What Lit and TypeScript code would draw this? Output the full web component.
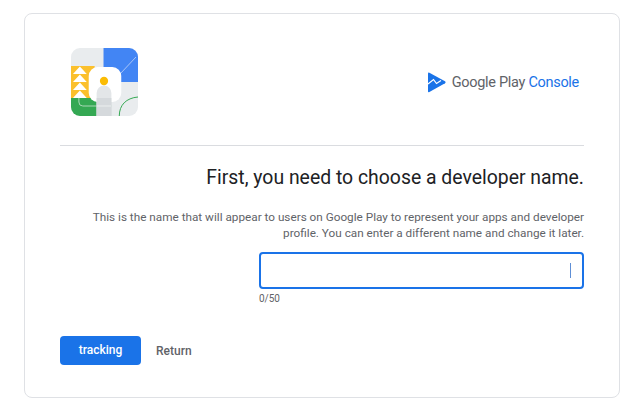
import { css, html, LitElement } from "lit";
import { customElement } from "lit/decorators.js";

@customElement("app-root")
export class AppRoot extends LitElement {
  render() {
    return html`
      <div class="card">
        <div class="header">
          <svg class="art" width="67" height="68" viewBox="0 0 68 68" preserveAspectRatio="none">
            <defs>
              <clipPath id="tile"><rect width="68" height="68" rx="9" /></clipPath>
            </defs>
            <g clip-path="url(#tile)">
              <rect width="68" height="68" fill="#e9ecee" />
              <rect x="33" width="35" height="34" fill="#4285f4" />
              <path d="M44 32 L66 9" stroke="#a9c6f7" stroke-width="1" fill="none" />
              <rect y="18" width="24" height="32" fill="#fbc02d" />
              <path d="M2 26 L9 18.5 L16 26Z M2 34 L9 26.5 L16 34Z M2 42 L9 34.5 L16 42Z M2 50 L9 42.5 L16 50Z" fill="#fff" />
              <rect y="50" width="26" height="18" fill="#34a853" />
              <rect x="26" y="50" width="15" height="18" fill="#d5d9dc" />
              <path d="M8 50 V54 Q8 58 12 58 H41" stroke="#a8d8b6" stroke-width="1" fill="none" />
              <path d="M49 68 C49 57 56 50 68 49" stroke="#34a853" stroke-width="1" fill="none" />
              <rect x="18" y="19" width="33" height="35" rx="9" fill="#fff" />
              <path d="M26 54 V45 A7.5 7.5 0 0 1 41 45 V54Z" fill="#e3e6e8" />
              <rect x="26" y="50" width="15" height="18" fill="#d5d9dc" />
              <path d="M26 58 H41" stroke="#eceff0" stroke-width="1" />
              <circle cx="33.5" cy="33" r="4.2" fill="#fbbc04" />
            </g>
          </svg>
          <div class="brand">
            <svg width="19" height="21" viewBox="0 0 19 21">
              <path d="M1 1.5 Q1 .2 2.4 .8 L18 9.2 Q19.2 10.2 18 11.2 L2.4 20 Q1 20.6 1 19.2Z" fill="#1a73e8" />
              <path d="M1 12 L6.5 7.5 L9.5 11.5 L14 8.5" stroke="#fff" stroke-width="1.2" fill="none" />
            </svg>
            <span class="wordmark">Google Play <span class="console">Console</span></span>
          </div>
        </div>
        <div class="body">
          <h1>First, you need to choose a developer name.</h1>
          <p>
            This is the name that will appear to users on Google Play to represent your apps and
            developer<br />profile. You can enter a different name and change it later.
          </p>
          <div class="field">
            <div class="input"><span class="caret"></span></div>
            <div class="count">0/50</div>
          </div>
          <div class="actions">
            <button class="primary">tracking</button>
            <button class="link">Return</button>
          </div>
        </div>
      </div>
    `;
  }

  static styles = css`
    :host {
      display: block;
      width: 624px;
      height: 407px;
      background: #fff;
      font-family: Roboto, "Liberation Sans", sans-serif;
      overflow: hidden;
    }

    .card {
      box-sizing: border-box;
      width: 596px;
      height: 385px;
      margin: 13px 0 0 24px;
      padding: 0 35px;
      border: 1px solid #dfe1e5;
      border-radius: 8px;
    }

    .header {
      display: flex;
      align-items: flex-start;
      justify-content: space-between;
      height: 132px;
      padding: 34px 5px 0 11px;
      box-sizing: border-box;
      border-bottom: 1px solid #dadce0;
    }

    .art {
      display: block;
    }

    .brand {
      display: flex;
      align-items: center;
      gap: 6px;
      margin-top: 24px;
    }

    .wordmark {
      font-size: 14.5px;
      letter-spacing: -0.3px;
      color: #5f6368;
    }

    .console {
      color: #1a73e8;
    }

    .body {
      display: flex;
      flex-direction: column;
    }

    h1 {
      margin: 19px 0 0;
      text-align: right;
      font-size: 19.4px;
      line-height: 26px;
      font-weight: 400;
      color: #202124;
    }

    p {
      margin: 18px 0 0;
      text-align: right;
      font-size: 11.76px;
      line-height: 16px;
      color: #5f6368;
    }

    .field {
      align-self: flex-end;
      width: 325px;
      margin-top: 11px;
    }

    .input {
      box-sizing: border-box;
      display: flex;
      align-items: center;
      justify-content: flex-end;
      height: 37px;
      padding-right: 11px;
      border: 2px solid #1a73e8;
      border-radius: 4px;
    }

    .caret {
      width: 1px;
      height: 15px;
      background: #5f8fd6;
    }

    .count {
      margin-top: 3px;
      font-size: 10px;
      line-height: 13px;
      color: #5f6368;
    }

    .actions {
      display: flex;
      align-items: center;
      gap: 15px;
      margin-top: 31px;
    }

    button {
      border: 0;
      background: none;
      padding: 0;
      font: inherit;
      font-size: 12px;
      font-weight: 500;
    }

    .primary {
      width: 81px;
      height: 29px;
      padding-bottom: 1px;
      border-radius: 4px;
      background: #1a73e8;
      color: #fff;
    }

    .link {
      color: #5f6368;
    }
  `;
}

declare global {
  interface HTMLElementTagNameMap {
    "app-root": AppRoot;
  }
}
